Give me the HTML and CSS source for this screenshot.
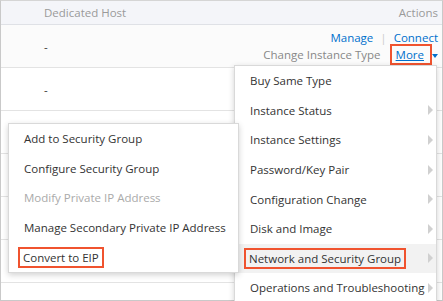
FILE: index.html
```html
<!DOCTYPE html>
<html lang="en">
<head>
    <meta charset="UTF-8">
    <title>Instances - More Actions</title>
    <link rel="stylesheet" href="styles.css">
</head>
<body>
    <div class="grid">
        <div class="row head">
            <div class="cell host">Dedicated Host</div>
            <div class="cell actions">Actions</div>
        </div>
        <div class="row hover">
            <div class="cell host">-</div>
            <div class="cell actions">
                <div class="line">
                    <a class="link">Manage</a>
                    <span class="sep">|</span>
                    <a class="link">Connect</a>
                </div>
                <div class="line">
                    <span class="muted">Change Instance Type</span>
                    <a class="link more mark">More</a>
                    <span class="caret"></span>
                </div>
            </div>
        </div>
        <div class="row">
            <div class="cell host">-</div>
            <div class="cell actions"></div>
        </div>
        <div class="row"></div>
        <div class="row"></div>
        <div class="row"></div>
        <div class="row"></div>
    </div>

    <!-- "More" dropdown -->
    <ul class="menu menu-main">
        <li>Buy Same Type</li>
        <li class="sub">Instance Status</li>
        <li class="sub">Instance Settings</li>
        <li class="sub">Password/Key Pair</li>
        <li class="sub">Configuration Change</li>
        <li class="sub">Disk and Image</li>
        <li class="sub active"><span class="mark">Network and Security Group</span></li>
        <li class="sub">Operations and Troubleshooting</li>
    </ul>

    <!-- submenu: Network and Security Group -->
    <ul class="menu menu-sub">
        <li>Add to Security Group</li>
        <li>Configure Security Group</li>
        <li class="disabled">Modify Private IP Address</li>
        <li>Manage Secondary Private IP Address</li>
        <li><span class="mark">Convert to EIP</span></li>
    </ul>
</body>
</html>
```

FILE: styles.css
```css
body {
    margin: 0;
    width: 443px;
    height: 301px;
    overflow: hidden;
    position: relative;
    font-family: "Open Sans", "Noto Sans", sans-serif;
    font-size: 11.5px;
    color: #333;
}

.grid {
    box-sizing: border-box;
    height: 301px;
    border: 1px solid #c9c9c9;
    border-top-color: #d5d5d5;
    overflow: hidden;
}

.row {
    display: flex;
    justify-content: space-between;
    height: 42px;
    border-bottom: 1px solid #e3e3e3;
}

.row.head {
    height: 23px;
    background: #f4f5f9;
    border-bottom-color: #dfe1e6;
    color: #9a9a9a;
    align-items: center;
}

.row.hover {
    background: #fbfbfb;
}

.cell.host {
    padding-left: 43px;
    display: flex;
    align-items: center;
}

.cell.actions {
    padding-right: 4px;
    display: flex;
    flex-direction: column;
    justify-content: center;
    align-items: flex-end;
}

.line {
    display: flex;
    align-items: center;
    height: 17px;
}

.link {
    color: #0070cc;
}

.sep {
    color: #ccc;
    margin: 0 7px;
}

.muted {
    color: #888;
}

.more {
    text-decoration: underline;
    margin-left: 12px;
    padding: 0 5px 0 3px;
}

.caret {
    width: 0;
    height: 0;
    border-left: 3px solid transparent;
    border-right: 3px solid transparent;
    border-top: 4px solid #0070cc;
    margin-left: 3px;
    margin-top: 3px;
}

.mark {
    outline: 2px solid #f0532f;
    outline-offset: 1px;
}

.menu {
    position: absolute;
    margin: 0;
    padding: 0;
    list-style: none;
    background: #fff;
    border: 1px solid #d9d9d9;
    box-shadow: 0 2px 6px rgba(0, 0, 0, 0.18);
}

.menu li {
    height: 29.6px;
    display: flex;
    align-items: center;
    padding-left: 15px;
    position: relative;
    white-space: nowrap;
}

.menu-main {
    top: 65px;
    left: 234px;
    width: 201px;
    height: 236px;
}

.menu-sub {
    top: 123px;
    left: 8px;
    width: 229px;
}

.menu .sub::after {
    content: "";
    position: absolute;
    right: 3px;
    top: 50%;
    margin-top: -5px;
    border-top: 5px solid transparent;
    border-bottom: 5px solid transparent;
    border-left: 5px solid #d0d0d0;
}

.menu .active {
    background: #f2f2f2;
}

.menu .mark {
    padding: 0 2px;
    margin-left: -3px;
}

.menu .disabled {
    color: #aaa;
}
```
